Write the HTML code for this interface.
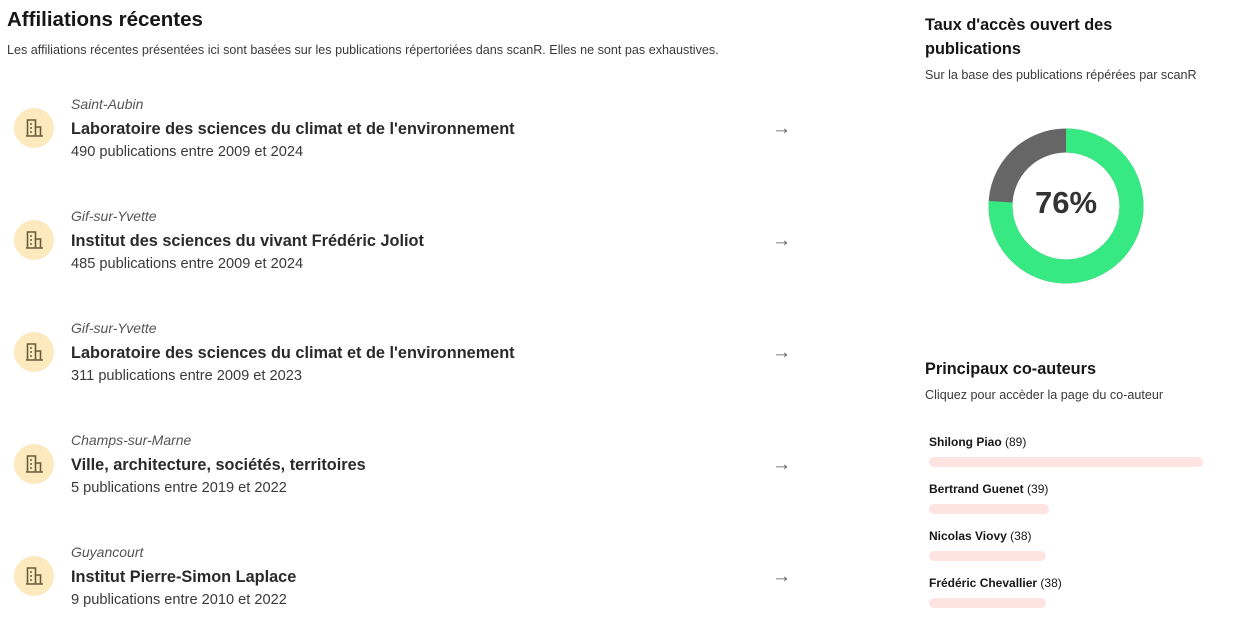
<!DOCTYPE html>
<html><head><meta charset="utf-8"><style>
body{margin:0;width:1244px;height:620px;background:#fff;font-family:"Liberation Sans",sans-serif;color:#161616;position:relative;overflow:hidden}
.a{position:absolute}
h1{position:absolute;left:7px;top:8px;margin:0;font-size:20.5px;font-weight:bold;color:#161616}
.sub{font-size:12.6px;color:#3a3a3a}
.ic{position:absolute;left:14px;width:40px;height:40px;border-radius:50%;background:#fde9bd}
.city{font-size:14px;font-style:italic;color:#555}
.ttl{font-size:16.3px;font-weight:bold;color:#2a2a2a}
.cnt{font-size:14.6px;color:#3a3a3a}
.arr{position:absolute;left:772px;font-size:19px;color:#555}
.nm{font-size:12px;color:#161616}
.nm b{font-weight:bold}
.bar{position:absolute;left:929px;height:10px;border-radius:5px;background:#fde4e1}
</style></head><body>
<h1>Affiliations récentes</h1>
<div class="a sub" style="left:7px;top:43px">Les affiliations récentes présentées ici sont basées sur les publications répertoriées dans scanR. Elles ne sont pas exhaustives.</div>

<div class="ic" style="top:108px"><svg width="40" height="40"><g fill="none" stroke="#6b5a3a" stroke-width="1.6"><path d="M12 28h17M13.5 28V12h8v16M21.5 19h5v9M16 16h2M16 20h2M16 24h2"/></g></svg></div>
<div class="a city" style="left:71px;top:96px">Saint-Aubin</div>
<div class="a ttl" style="left:71px;top:120px">Laboratoire des sciences du climat et de l'environnement</div>
<div class="a cnt" style="left:71px;top:144px">490 publications entre 2009 et 2024</div>
<div class="arr" style="top:118px">→</div>

<div class="ic" style="top:220px"><svg width="40" height="40"><g fill="none" stroke="#6b5a3a" stroke-width="1.6"><path d="M12 28h17M13.5 28V12h8v16M21.5 19h5v9M16 16h2M16 20h2M16 24h2"/></g></svg></div>
<div class="a city" style="left:71px;top:208px">Gif-sur-Yvette</div>
<div class="a ttl" style="left:71px;top:232px">Institut des sciences du vivant Frédéric Joliot</div>
<div class="a cnt" style="left:71px;top:256px">485 publications entre 2009 et 2024</div>
<div class="arr" style="top:230px">→</div>

<div class="ic" style="top:332px"><svg width="40" height="40"><g fill="none" stroke="#6b5a3a" stroke-width="1.6"><path d="M12 28h17M13.5 28V12h8v16M21.5 19h5v9M16 16h2M16 20h2M16 24h2"/></g></svg></div>
<div class="a city" style="left:71px;top:320px">Gif-sur-Yvette</div>
<div class="a ttl" style="left:71px;top:344px">Laboratoire des sciences du climat et de l'environnement</div>
<div class="a cnt" style="left:71px;top:368px">311 publications entre 2009 et 2023</div>
<div class="arr" style="top:342px">→</div>

<div class="ic" style="top:444px"><svg width="40" height="40"><g fill="none" stroke="#6b5a3a" stroke-width="1.6"><path d="M12 28h17M13.5 28V12h8v16M21.5 19h5v9M16 16h2M16 20h2M16 24h2"/></g></svg></div>
<div class="a city" style="left:71px;top:432px">Champs-sur-Marne</div>
<div class="a ttl" style="left:71px;top:456px">Ville, architecture, sociétés, territoires</div>
<div class="a cnt" style="left:71px;top:480px">5 publications entre 2019 et 2022</div>
<div class="arr" style="top:454px">→</div>

<div class="ic" style="top:556px"><svg width="40" height="40"><g fill="none" stroke="#6b5a3a" stroke-width="1.6"><path d="M12 28h17M13.5 28V12h8v16M21.5 19h5v9M16 16h2M16 20h2M16 24h2"/></g></svg></div>
<div class="a city" style="left:71px;top:544px">Guyancourt</div>
<div class="a ttl" style="left:71px;top:568px">Institut Pierre-Simon Laplace</div>
<div class="a cnt" style="left:71px;top:592px">9 publications entre 2010 et 2022</div>
<div class="arr" style="top:566px">→</div>

<div class="a" style="left:925px;top:13px;font-size:16.3px;font-weight:bold;line-height:24px;color:#161616">Taux d'accès ouvert des<br>publications</div>
<div class="a sub" style="left:925px;top:68px">Sur la base des publications répérées par scanR</div>
<svg class="a" style="left:986px;top:126px" width="160" height="160">
<circle cx="80" cy="80" r="65.5" fill="none" stroke="#666" stroke-width="24"/>
<circle cx="80" cy="80" r="65.5" fill="none" stroke="#36e982" stroke-width="24" stroke-dasharray="312.8 500" transform="rotate(-90 80 80)"/>
<text x="80" y="87" text-anchor="middle" font-family="Liberation Sans" font-weight="bold" font-size="31" fill="#333">76%</text>
</svg>

<div class="a" style="left:925px;top:360px;font-size:16.3px;font-weight:bold;color:#161616">Principaux co-auteurs</div>
<div class="a sub" style="left:925px;top:388px">Cliquez pour accèder la page du co-auteur</div>
<div class="a nm" style="left:929px;top:435px"><b>Shilong Piao</b> (89)</div>
<div class="bar" style="top:457px;width:274px"></div>
<div class="a nm" style="left:929px;top:482px"><b>Bertrand Guenet</b> (39)</div>
<div class="bar" style="top:504px;width:120px"></div>
<div class="a nm" style="left:929px;top:529px"><b>Nicolas Viovy</b> (38)</div>
<div class="bar" style="top:551px;width:117px"></div>
<div class="a nm" style="left:929px;top:576px"><b>Frédéric Chevallier</b> (38)</div>
<div class="bar" style="top:598px;width:117px"></div>
</body></html>
